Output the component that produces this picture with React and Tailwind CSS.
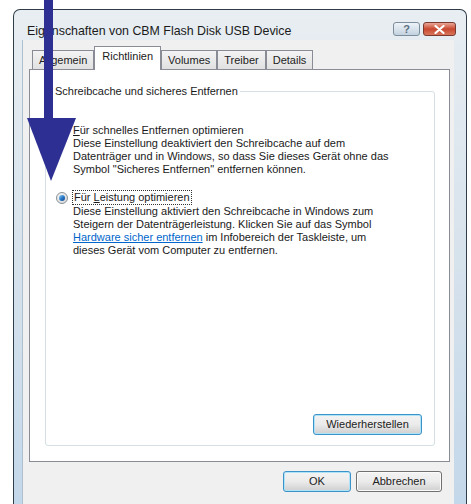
// USB device properties dialog (Vista style) with a pointer arrow on top
const ui = "font-['Liberation_Sans',Arial,sans-serif]";

function Radio({ checked }) {
  return (
    <span className="flex h-[12px] w-[12px] shrink-0 items-center justify-center rounded-full border border-[#8a8f95] bg-gradient-to-br from-[#f4f4f4] to-[#d6d9dc]">
      {checked && (
        <span className="h-[6px] w-[6px] rounded-full bg-gradient-to-br from-[#8fd0f5] via-[#2a7cc8] to-[#123f86]" />
      )}
    </span>
  );
}

function Tab({ label, active }) {
  if (active) {
    return (
      <div className="relative z-10 -mb-px flex h-[24px] items-start border border-b-0 border-[#898c95] bg-white px-[7px] pt-[3px] leading-[13px]">
        {label}
      </div>
    );
  }
  return (
    <div className="flex h-[19px] items-center border border-b-0 border-[#898c95] bg-gradient-to-b from-[#f3f3f3] to-[#e1e1e1] px-[6px] leading-[13px] text-[#222]">
      {label}
    </div>
  );
}

function Button({ children, width, focused }) {
  return (
    <div
      className={`flex h-[21px] items-center justify-center rounded-[3px] border bg-gradient-to-b from-[#f3f3f3] via-[#ebebeb] to-[#cfcfcf] text-[#222] ${width} ${
        focused
          ? "border-[#3c93c9] shadow-[inset_0_0_0_1px_#aee3f8]"
          : "border-[#707070] shadow-[inset_0_0_0_1px_#fbfbfb]"
      }`}
    >
      {children}
    </div>
  );
}

export default function App() {
  return (
    <div className={`relative h-[504px] w-[471px] overflow-hidden bg-white pl-[13px] pt-[9px] text-[11px] text-[#1a1a1a] ${ui}`}>
      <div className="flex h-[510px] w-[454px] flex-col rounded-t-[7px] border border-b-0 border-[#2f3d49] bg-gradient-to-b from-[#e8eef2] via-[#d6e2ec] to-[#c2d7ea]">
        {/* caption */}
        <div className="flex h-[30px] shrink-0 items-start pl-[13px] pr-[10px] pt-[12px]">
          <span className="mt-[2px] flex-1 text-[12.4px] leading-[14px] text-[#1b1b1b]">
            Eigenschaften von CBM Flash Disk USB Device
          </span>
          <div className="flex gap-[3px]">
            <div className="flex h-[14px] w-[27px] items-center justify-center rounded-[3px] border border-[#7c8d9c] bg-gradient-to-b from-[#eef3f7] via-[#d9e3ec] to-[#c3d2df] text-[11px] font-bold leading-none text-[#5c6f80]">
              ?
            </div>
            <div className="flex h-[14px] w-[33px] items-center justify-center rounded-[3px] border border-[#7a3a30] bg-gradient-to-b from-[#e9a596] via-[#c8472f] to-[#d8765c]">
              <svg width="11" height="9" viewBox="0 0 11 9">
                <path d="M1.5 1 L9.5 8 M9.5 1 L1.5 8" stroke="#fff" strokeWidth="2.2" strokeLinecap="round" />
              </svg>
            </div>
          </div>
        </div>

        {/* client area */}
        <div className="ml-[8px] mr-[12px] flex flex-1 flex-col border-l border-[#aebfce] bg-[#f0f0f0] pl-[6px] pr-[4px] pt-[6px]">
          <div className="flex items-end pl-[3px]">
            <Tab label="Allgemein" />
            <Tab label="Richtlinien" active />
            <Tab label="Volumes" />
            <Tab label="Treiber" />
            <Tab label="Details" />
          </div>

          <div className="h-[393px] border border-[#898c95] bg-white">
            <div className="ml-[15px] mr-[14px] mt-[21px] flex h-[355px] flex-col rounded-[3px] border border-[#d5dfe5]">
              <div className="-mt-[7px] ml-[7px] w-fit bg-white px-[2px] leading-[13px]">
                Schreibcache und sicheres Entfernen
              </div>

              <div className="mt-[26px] flex items-center pl-[10px] leading-[13px]">
                <Radio />
                <span className="ml-[5px]">
                  <span className="underline">F</span>ür schnelles Entfernen optimieren
                </span>
              </div>
              <p className="pl-[27px] leading-[13px]">
                Diese Einstellung deaktiviert den Schreibcache auf dem
                <br />
                Datenträger und in Windows, so dass Sie dieses Gerät ohne das
                <br />
                Symbol "Sicheres Entfernen" entfernen können.
              </p>

              <div className="mt-[14px] flex items-center pl-[10px] leading-[13px]">
                <Radio checked />
                <span className="ml-[4px] border border-dotted border-[#333] px-px">
                  Für <span className="underline">L</span>eistung optimieren
                </span>
              </div>
              <p className="pl-[27px] leading-[13px]">
                Diese Einstellung aktiviert den Schreibcache in Windows zum
                <br />
                Steigern der Datenträgerleistung. Klicken Sie auf das Symbol
                <br />
                <span className="text-[#0066cc] underline">Hardware sicher entfernen</span> im Infobereich der Taskleiste, um
                <br />
                dieses Gerät vom Computer zu entfernen.
              </p>

              <div className="mb-[10px] mr-[12px] mt-auto self-end">
                <Button width="w-[109px]" focused>
                  Wiederherstellen
                </Button>
              </div>
            </div>
          </div>

          <div className="mt-[9px] flex justify-end gap-[5px] pr-[8px]">
            <Button width="w-[68px]" focused>
              OK
            </Button>
            <Button width="w-[86px]">Abbrechen</Button>
          </div>
        </div>
      </div>

      {/* pointer arrow */}
      <svg className="pointer-events-none absolute left-0 top-0" width="100" height="190" viewBox="0 0 100 190">
        <rect x="44" y="0" width="9" height="120" fill="#2d3092" />
        <polygon points="27,118 76,118 51,181" fill="#2d3092" />
      </svg>
    </div>
  );
}
